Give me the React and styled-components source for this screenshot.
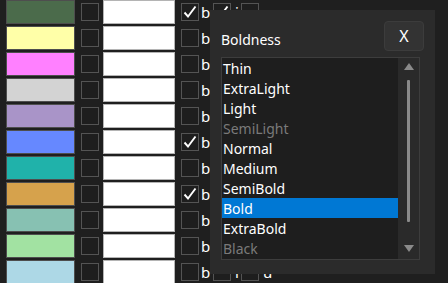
import React from "react";
import styled, { createGlobalStyle } from "styled-components";

const Global = createGlobalStyle`
  html, body { margin: 0; padding: 0; background: #1f1f1f; overflow: hidden; }
  body { font-family: "Noto Sans", "Open Sans", sans-serif; color: #fff; }
`;

const Page = styled.div`
  position: relative;
  width: 448px;
  height: 283px;
  overflow: hidden;
  background: #1f1f1f;
`;

const Rows = styled.div`
  display: flex;
  flex-direction: column;
  gap: 2px;
  padding-left: 6px;
`;

const Row = styled.div`
  display: flex;
  align-items: center;
  height: 24px;
`;

const Swatch = styled.div`
  width: 69px;
  height: 24px;
  box-sizing: border-box;
  border: 1px solid #4e4e4e;
  background: ${(p) => p.$color};
`;

const Box = styled.div`
  width: 18px;
  height: 18px;
  box-sizing: border-box;
  border: 1px solid #545454;
  background: #1e1e1e;
  margin-left: ${(p) => p.$ml}px;
  display: flex;
  align-items: center;
  justify-content: center;
`;

const TextBox = styled.div`
  width: 72px;
  height: 24px;
  box-sizing: border-box;
  border: 1px solid #b4b4b4;
  background: #fff;
  margin-left: 4px;
`;

const Letter = styled.span`
  font-size: 15px;
  line-height: 24px;
  margin-left: ${(p) => p.$ml}px;
  width: ${(p) => p.$w}px;
  color: #fff;
`;

const Check = () => (
  <svg width="16" height="16" viewBox="0 0 16 16">
    <path d="M2.5 8.5 L6 12.5 L13.5 2.5" fill="none" stroke="#fff" strokeWidth="1.9" />
  </svg>
);

const Dialog = styled.div`
  position: absolute;
  left: 210px;
  top: 10px;
  width: 225px;
  height: 264px;
  background: #2b2b2b;
  box-sizing: border-box;
  padding: 11px 15px 0 11px;
  display: flex;
  flex-direction: column;
  gap: 6px;
`;

const Header = styled.div`
  display: flex;
  align-items: center;
  justify-content: space-between;
  height: 30px;
  margin-right: -4px;
`;

const Title = styled.div`
  font-size: 14px;
  color: #fff;
  padding-top: 6px;
`;

const CloseButton = styled.div`
  width: 40px;
  height: 30px;
  box-sizing: border-box;
  border: 1px solid #3c3c3c;
  border-radius: 4px;
  background: #333;
  display: flex;
  align-items: center;
  justify-content: center;
  font-size: 16px;
  color: #fff;
`;

const ListBox = styled.div`
  width: 199px;
  height: 203px;
  box-sizing: border-box;
  border: 1px solid #3d3d3d;
  background: #1e1e1e;
  display: flex;
`;

const Items = styled.div`
  flex: 1;
  display: flex;
  flex-direction: column;
`;

const Item = styled.div`
  height: 20px;
  line-height: 21px;
  padding-left: 1px;
  font-size: 14px;
  color: ${(p) => (p.$disabled ? "#7a7a7a" : "#fff")};
  background: ${(p) => (p.$selected ? "#0078d4" : "transparent")};
`;

const ScrollBar = styled.div`
  width: 21px;
  background: #2a2a2a;
  display: flex;
  flex-direction: column;
  align-items: center;
  padding-top: 4px;
  box-sizing: border-box;
`;

const Thumb = styled.div`
  width: 3px;
  height: 142px;
  background: #8a8a8a;
  border-radius: 1px;
  margin: 9px 0 22px;
`;

const Arrow = ({ down }) => (
  <svg width="12" height="9" viewBox="0 0 12 9">
    <path d={down ? "M1 1 H11 L6 8 Z" : "M1 8 H11 L6 1 Z"} fill="#8a8a8a" />
  </svg>
);

const rows = [
  { color: "#4b6b4b", b: true, i: true },
  { color: "#ffffa8" },
  { color: "#ff80ff" },
  { color: "#d3d3d3" },
  { color: "#a994c8" },
  { color: "#6688ff", b: true },
  { color: "#20b2aa" },
  { color: "#d6a24c", b: true },
  { color: "#87c1b2" },
  { color: "#a2e2a2" },
  { color: "#add8e6" },
];

const weights = [
  { n: "Thin" },
  { n: "ExtraLight" },
  { n: "Light" },
  { n: "SemiLight", d: true },
  { n: "Normal" },
  { n: "Medium" },
  { n: "SemiBold" },
  { n: "Bold", s: true },
  { n: "ExtraBold" },
  { n: "Black", d: true },
];

export default function App() {
  return (
    <Page>
      <Global />
      <Rows>
        {rows.map((r, idx) => (
          <Row key={idx}>
            <Swatch $color={r.color} />
            <Box $ml={6} />
            <TextBox />
            <Box $ml={6}>{r.b && <Check />}</Box>
            <Letter $ml={2} $w={10}>b</Letter>
            <Box $ml={2}>{r.i && <Check />}</Box>
            <Letter $ml={4} $w={4}>i</Letter>
            <Box $ml={2} />
            <Letter $ml={4} $w={10}>u</Letter>
          </Row>
        ))}
      </Rows>
      <Dialog>
        <Header>
          <Title>Boldness</Title>
          <CloseButton>X</CloseButton>
        </Header>
        <ListBox>
          <Items>
            {weights.map((w) => (
              <Item key={w.n} $disabled={w.d} $selected={w.s}>
                {w.n}
              </Item>
            ))}
          </Items>
          <ScrollBar>
            <Arrow />
            <Thumb />
            <Arrow down />
          </ScrollBar>
        </ListBox>
      </Dialog>
    </Page>
  );
}
